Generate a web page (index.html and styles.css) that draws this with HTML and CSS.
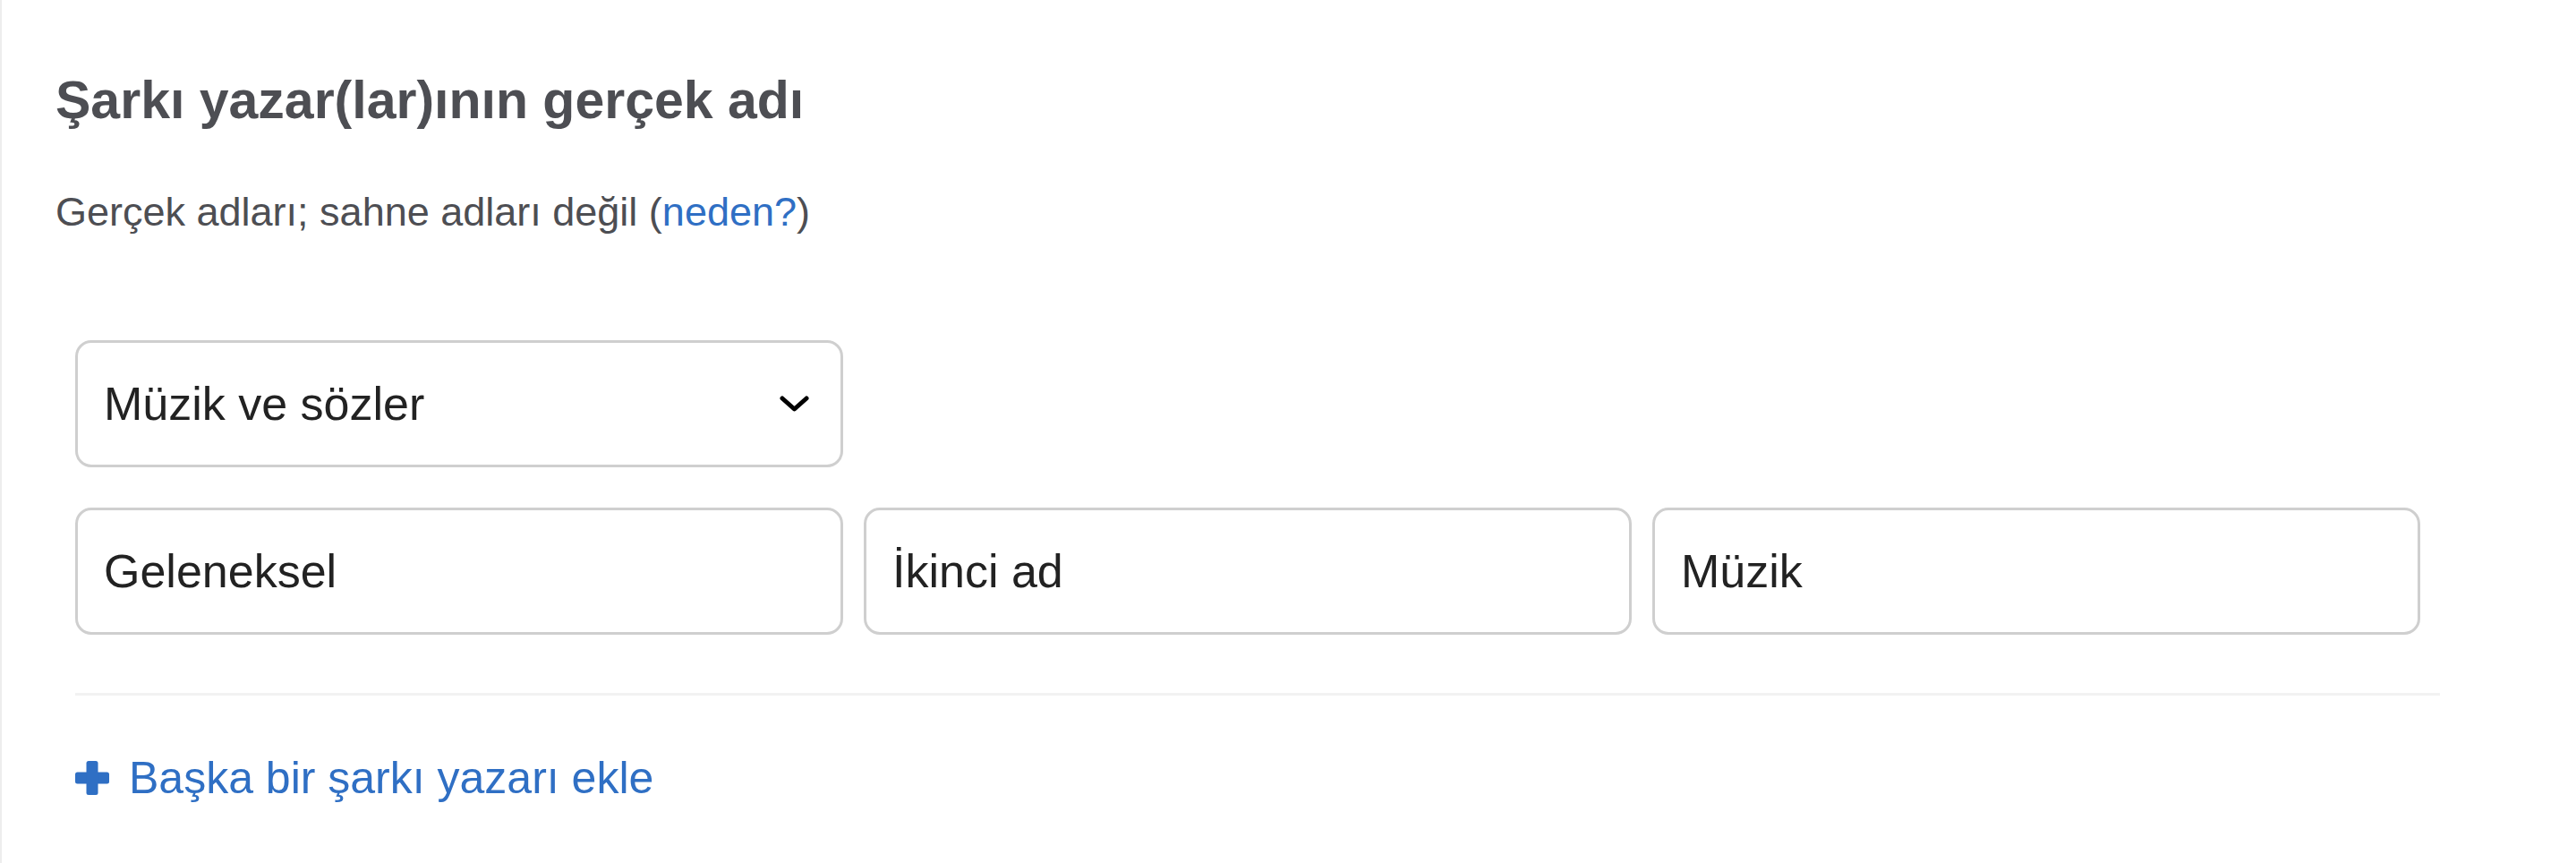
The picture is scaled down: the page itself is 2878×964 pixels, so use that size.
FILE: index.html
```html
<!DOCTYPE html>
<html lang="tr">
<head>
  <meta charset="UTF-8" />
  <meta name="viewport" content="width=device-width, initial-scale=1.0"/>
  <title>Şarkı yazarları</title>
  <link rel="stylesheet" href="styles.css">
</head>
<body>
  <section class="card" aria-labelledby="writers-title">
    <h2 id="writers-title" class="card-title">Şarkı yazar(lar)ının gerçek adı</h2>
    <p class="card-hint">Gerçek adları; sahne adları değil (<a href="#">neden?</a>)</p>

    <div class="writer">
      <div class="writer-type">
        <select aria-label="Katkı türü">
          <option selected>Müzik ve sözler</option>
          <option>Müzik</option>
          <option>Sözler</option>
        </select>
        <svg class="chevron" width="33" height="18" viewBox="0 0 33 18" aria-hidden="true">
          <polyline points="3,3 16.5,15 30,3" fill="none" stroke="#000" stroke-width="5" stroke-linecap="round" stroke-linejoin="round"/>
        </svg>
      </div>

      <div class="writer-names">
        <input class="name-input" type="text" value="Geleneksel" aria-label="Ad">
        <input class="name-input" type="text" placeholder="İkinci ad" aria-label="İkinci ad">
        <input class="name-input" type="text" value="Müzik" aria-label="Soyad">
      </div>

      <div class="divider"></div>

      <a class="add-writer" href="#">
        <svg width="38" height="38" viewBox="0 0 38 38" aria-hidden="true">
          <rect x="0" y="12.5" width="38" height="13" rx="2.5" fill="currentColor"/>
          <rect x="12.5" y="0" width="13" height="38" rx="2.5" fill="currentColor"/>
        </svg>
        Başka bir şarkı yazarı ekle
      </a>
    </div>
  </section>
</body>
</html>
```

FILE: styles.css
```css
body {
  margin: 0;
  font-family: "Liberation Sans", Arial, sans-serif;
  background: #fff;
  color: #222;
}
.card {
  box-sizing: border-box;
  min-height: 964px;
  padding: 77px 0 0 60px;
  border-left: 2px solid #ededed;
}
.card-title {
  margin: 0;
  font-size: 59px;
  line-height: 70px;
  font-weight: 700;
  color: #4d4e53;
}
.card-hint {
  margin: 60px 0 0;
  font-size: 45px;
  line-height: 60px;
  color: #4d4e53;
}
.card-hint a {
  color: #2f6fc4;
  text-decoration: none;
}
.writer {
  width: 2642px;
  margin: 113px 0 0 22px;
}
.writer-type {
  position: relative;
  width: 858px;
}
.writer-type select {
  box-sizing: border-box;
  width: 100%;
  height: 142px;
  padding: 0 90px 0 29px;
  border: 3px solid #cfcfcf;
  border-radius: 18px;
  background: #fff;
  color: #222;
  font-family: inherit;
  font-size: 52px;
  appearance: none;
  -webkit-appearance: none;
}
.chevron {
  position: absolute;
  top: 62px;
  right: 38px;
  pointer-events: none;
}
.writer-names {
  display: flex;
  gap: 23px;
  margin-top: 45px;
}
.name-input {
  box-sizing: border-box;
  flex: none;
  width: 858px;
  height: 142px;
  padding: 0 29px;
  border: 3px solid #cfcfcf;
  border-radius: 18px;
  background: #fff;
  color: #222;
  font-family: inherit;
  font-size: 52px;
}
.name-input::placeholder {
  color: #222;
}
.divider {
  height: 3px;
  margin-top: 65px;
  background: #f2f2f2;
}
.add-writer {
  display: flex;
  align-items: center;
  gap: 22px;
  margin-top: 62px;
  font-size: 50px;
  line-height: 60px;
  color: #2f6fc4;
  text-decoration: none;
}
```
